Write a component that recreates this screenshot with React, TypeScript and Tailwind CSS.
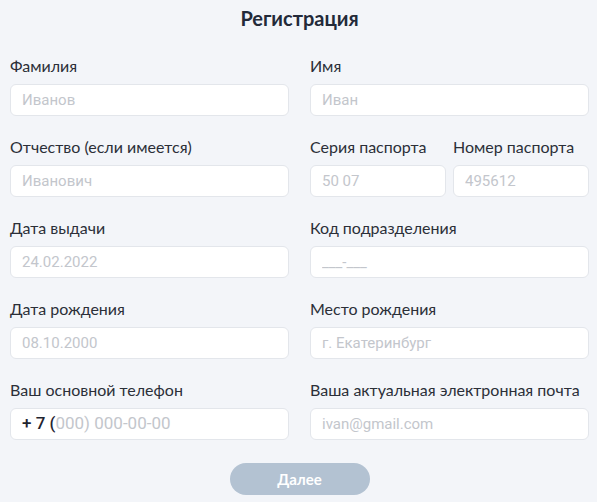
import React from 'react';

const labelCls = "mb-[8px] block text-[16px] leading-[20px] text-[#2b2f38] font-['Lato',sans-serif]";
const inputCls =
    "h-[32px] w-full rounded-[6px] border border-[#e3e6eb] bg-white px-[11px] text-[15px] text-[#2b2f38] font-['Roboto',sans-serif] placeholder:text-[#c3c6cc] outline-none";

function Field({ label, placeholder }: { label: string; placeholder: string }) {
    return (
        <div className="flex flex-col">
            <label className={labelCls}>{label}</label>
            <input className={inputCls} placeholder={placeholder} />
        </div>
    );
}

export default function App() {
    return (
        <div className="h-[502px] w-full overflow-hidden bg-[#f3f5f9] pl-[10px] pr-[8px] pt-[6px]">
            <h1 className="text-center text-[20px] leading-[24px] font-bold text-[#232a39] font-['Lato',sans-serif]">Регистрация</h1>

            <div className="mt-[26px] grid grid-cols-2 gap-x-[21px] gap-y-[21px]">
                <Field label="Фамилия" placeholder="Иванов" />
                <Field label="Имя" placeholder="Иван" />

                <Field label="Отчество (если имеется)" placeholder="Иванович" />
                <div className="grid grid-cols-2 gap-x-[7px]">
                    <Field label="Серия паспорта" placeholder="50 07" />
                    <Field label="Номер паспорта" placeholder="495612" />
                </div>

                <Field label="Дата выдачи" placeholder="24.02.2022" />
                <Field label="Код подразделения" placeholder="___-___" />

                <Field label="Дата рождения" placeholder="08.10.2000" />
                <Field label="Место рождения" placeholder="г. Екатеринбург" />

                <div className="flex flex-col">
                    <label className={labelCls}>Ваш основной телефон</label>
                    <div className="flex h-[32px] w-full items-center rounded-[6px] border border-[#e3e6eb] bg-white px-[11px] text-[17px] font-['Roboto',sans-serif]">
                        <span className="font-medium whitespace-pre text-[#1f2430]">+ 7 (</span>
                        <span className="text-[#c3c6cc]">000) 000-00-00</span>
                    </div>
                </div>
                <Field label="Ваша актуальная электронная почта" placeholder="ivan@gmail.com" />
            </div>

            <div className="mt-[23px] flex justify-center">
                <button className="h-[32px] w-[140px] rounded-full bg-[#b3c2d2] text-[15px] font-bold text-white font-['Lato',sans-serif]">
                    Далее
                </button>
            </div>
        </div>
    );
}
